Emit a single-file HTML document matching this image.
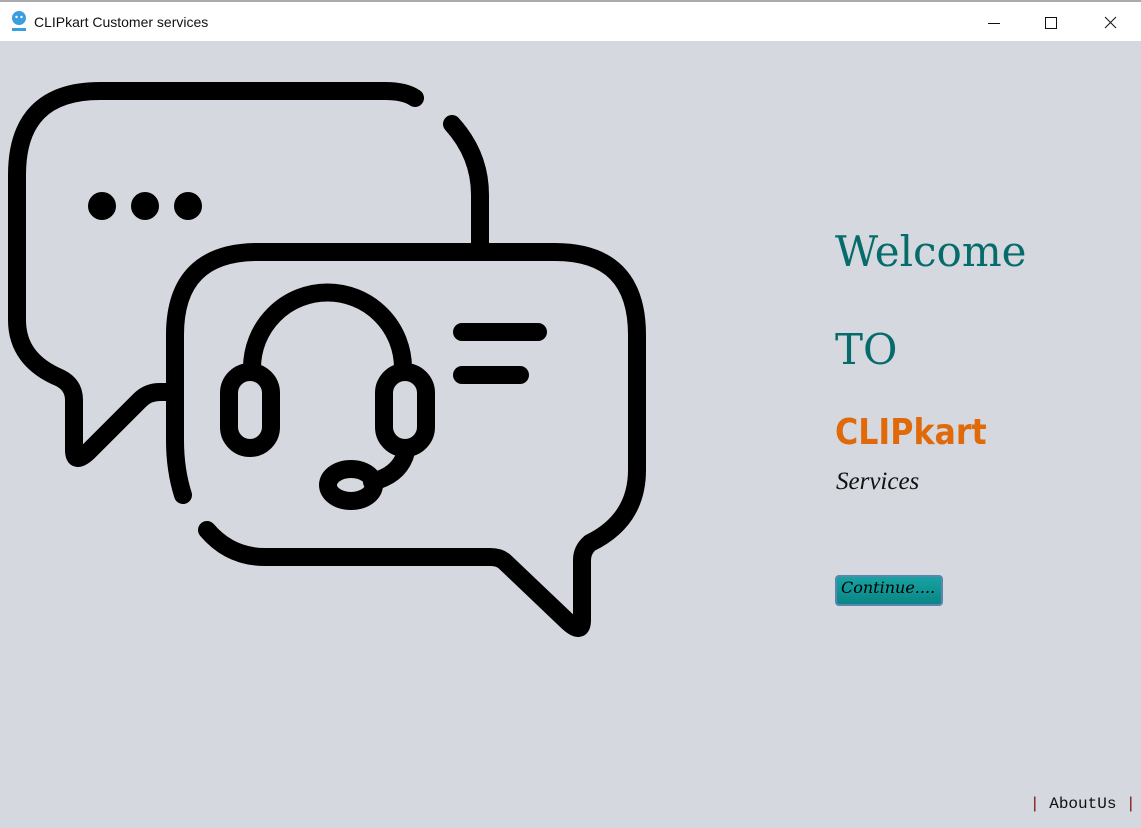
<!DOCTYPE html>
<html><head><meta charset="utf-8"><style>
html,body{margin:0;padding:0;}
body{width:1141px;height:828px;position:relative;overflow:hidden;background:#d5d8df;font-family:"Liberation Sans",sans-serif;}
.title{position:absolute;left:0;top:0;width:1141px;height:41px;background:#fff;border-top:2px solid #aaa;box-sizing:border-box;}
.title .t{position:absolute;left:34px;top:12px;font-size:14px;color:#111;}
.t1{position:absolute;left:835px;top:227px;font-family:"DejaVu Serif",serif;font-size:42px;color:#066b6b;}
.t2{position:absolute;left:835px;top:325px;font-family:"DejaVu Serif",serif;font-size:42px;color:#066b6b;}
.clip{position:absolute;left:835px;top:412px;font-family:"DejaVu Sans",sans-serif;font-weight:bold;font-size:36px;color:#e06a0a;transform:scaleX(0.88);transform-origin:left;}
.serv{position:absolute;left:836px;top:468px;font-family:"Liberation Serif",serif;font-style:italic;font-size:25px;color:#111;}
.btn{position:absolute;left:835px;top:575px;width:108px;height:31px;box-sizing:border-box;border:2px solid #5b86b0;border-radius:4px;background:linear-gradient(#17a3a3,#0a8585);font-family:"DejaVu Serif",serif;font-style:italic;font-size:16px;color:#000;padding:1px 0 0 4px;white-space:nowrap;}
.about{position:absolute;left:1030px;top:795px;font-family:"Liberation Mono",monospace;font-size:16px;color:#111;white-space:nowrap;}
.about b{color:#7a1010;font-weight:normal;}
</style></head><body>
<div class="title">
<svg style="position:absolute;left:10px;top:9px" width="18" height="22" viewBox="0 0 18 22"><circle cx="9" cy="7" r="7" fill="#3a9ee0"/><circle cx="6.5" cy="6" r="1.2" fill="#fff"/><circle cx="11.5" cy="6" r="1.2" fill="#fff"/><rect x="2" y="17" width="14" height="3" fill="#3a9ee0"/></svg>
<div class="t">CLIPkart Customer services</div>
<svg style="position:absolute;left:985px;top:11px" width="140" height="20" viewBox="0 0 140 20" fill="none" stroke="#111" stroke-width="1"><line x1="3" y1="10.5" x2="15" y2="10.5"/><rect x="60.5" y="4.5" width="11" height="11"/><path d="M120 4 L131 15 M131 4 L120 15"/></svg>
</div>
<svg style="position:absolute;left:0;top:0" width="700" height="700" viewBox="0 0 700 700" fill="none" stroke="#000" stroke-width="18" stroke-linecap="round" stroke-linejoin="round">
<path d="M415 98 Q405 91 385 91 L100 91 Q17 91 17 175 L17 320 Q17 360 60 378 Q74 385 74 400 L74 450 Q74 465 88 452 L140 400 Q148 392 160 392 L168 392"/>
<path d="M452 124 Q480 155 480 195 L480 245"/>
<path d="M183 495 Q175 470 175 440 L175 335 Q175 252 258 252 L555 252 Q637 252 637 335 L637 470 Q637 520 590 543 Q582 550 582 560 L582 620 Q582 635 568 622 L505 562 Q500 557 490 557 L265 557 Q230 557 207 530"/>
<path d="M252 368 A75 75 0 0 1 403 368"/>
<rect x="229" y="372" width="42" height="76" rx="21"/>
<rect x="384" y="372" width="42" height="76" rx="21"/>
<path d="M406 452 Q400 475 372 482"/>
<ellipse cx="351" cy="485" rx="23" ry="16"/>
<line x1="462" y1="332" x2="538" y2="332"/>
<line x1="462" y1="375" x2="520" y2="375"/>
<circle cx="102" cy="206" r="5" fill="#000"/><circle cx="145" cy="206" r="5" fill="#000"/><circle cx="188" cy="206" r="5" fill="#000"/>
</svg>
<div class="t1">Welcome</div>
<div class="t2">TO</div>
<div class="clip">CLIPkart</div>
<div class="serv">Services</div>
<div class="btn">Continue....</div>
<div class="about"><b>|</b> AboutUs <b>|</b></div>
</body></html>
